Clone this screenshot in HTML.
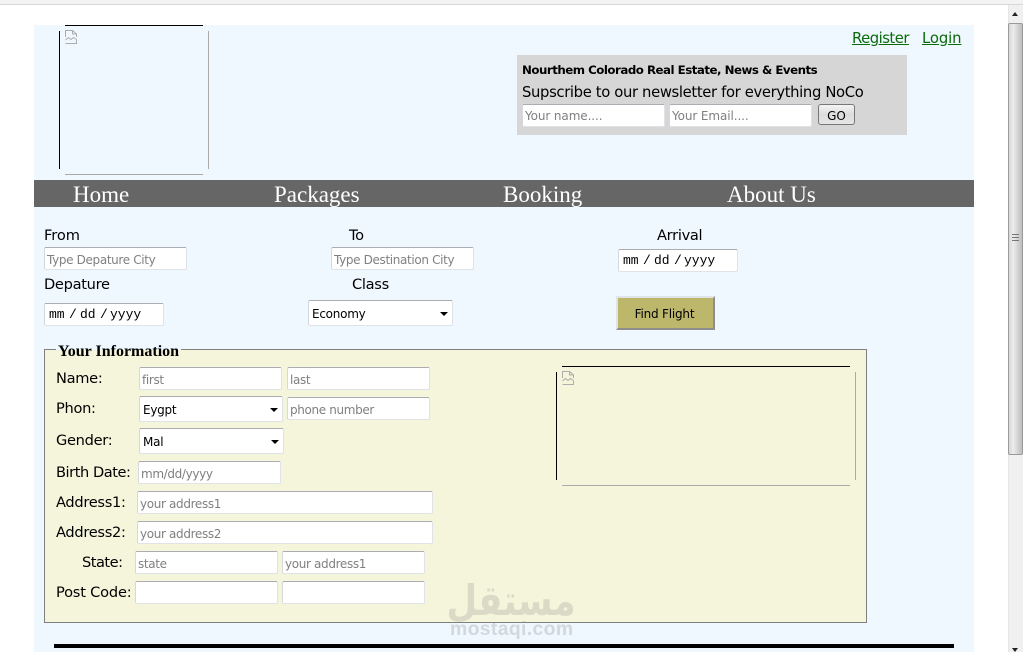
<!DOCTYPE html>
<html>
<head>
<meta charset="utf-8">
<style>
html,body{margin:0;padding:0;width:1023px;height:652px;overflow:hidden;background:#fff;}
body{position:relative;font-family:"DejaVu Sans","Liberation Sans",sans-serif;color:#000;}
.a,input,select,button,a{position:absolute;box-sizing:border-box;}
.l{position:absolute;font-size:14.6px;line-height:20px;white-space:nowrap;letter-spacing:-.3px;margin-top:1px;}
input{height:23px;width:143px;background:#fff;border:1px solid #dfe3e8;border-top-color:#abadb3;border-left-color:#d5d8de;border-radius:2px;padding:2px 2px 0;font:12px "DejaVu Sans",sans-serif;letter-spacing:-.35px;outline:0;}
input::placeholder{color:#808080;opacity:1;}
.sel{position:absolute;box-sizing:border-box;background:#fff;border:1px solid #dfe3e8;border-top-color:#abadb3;border-left-color:#d5d8de;border-radius:2px;font-size:12px;line-height:26px;padding-left:3px;letter-spacing:-.25px;}
.sel i{position:absolute;right:4px;top:11px;width:0;height:0;border:4px solid transparent;border-top:4px solid #000;border-bottom:0;}
.date{position:absolute;box-sizing:border-box;width:120px;height:23px;background:#fff;border:1px solid #dfe3e8;border-top-color:#abadb3;border-left-color:#d5d8de;border-radius:2px;font:13px/22px "Liberation Mono",monospace;}
.date span{position:absolute;top:0;white-space:pre;}
.nav{position:absolute;top:180px;color:#fff;font:23px/29px "Liberation Serif",serif;white-space:nowrap;}
.bi{position:absolute;box-sizing:border-box;}
.bi b{position:absolute;display:block;}
</style>
</head>
<body>
<div class="a" style="left:0;top:0;width:1023px;height:5px;background:#f3f3f3;border-bottom:1px solid #d8d8d8;"></div>

<div class="a" style="left:1008px;top:5px;width:15px;height:647px;background:#f0f0f0;border-left:1px solid #e6e6e6;"></div>
<div class="a" style="left:1008px;top:23px;width:15px;height:432px;background:linear-gradient(90deg,#d8d8d8,#ececec 35%,#dcdcdc 55%,#bdbdbd);border:1px solid #9a9a9a;border-radius:2px;"></div>
<div class="a" style="left:1012px;top:234px;width:7px;height:7px;border-top:1px solid #777;border-bottom:1px solid #777;"></div>
<div class="a" style="left:1012px;top:237px;width:7px;height:1px;background:#777;"></div>
<div class="a" style="left:1012px;top:12px;width:0;height:0;border:3.500px solid transparent;border-bottom:4px solid #222;border-top:0;"></div>
<div class="a" style="left:1012px;top:648px;width:0;height:0;border:3.500px solid transparent;border-top:4px solid #222;border-bottom:0;"></div>

<div class="a" style="left:34px;top:25px;width:940px;height:627px;background:#eff7ff;"></div>

<div class="bi" style="left:59px;top:25px;width:150px;height:150px;">
  <b style="left:6px;top:0;width:138px;height:1px;background:#000;"></b>
  <b style="left:0;top:6px;width:1px;height:138px;background:#000;"></b>
  <b style="right:0;top:6px;width:1px;height:138px;background:#aaa;"></b>
  <b style="left:6px;bottom:0;width:138px;height:1px;background:#aaa;"></b>
  <svg style="position:absolute;left:6px;top:5px" width="12" height="14" viewBox="0 0 12 14"><path d="M.5 7V.5h7l4 3.500v3M.5 13.500h11V9.500M7.500 .5V4h4M.5 10l3-2.500 2.500 2 2.500-2 3 2" fill="none" stroke="#adadad"/></svg>
</div>

<a href="#" style="left:852px;top:29px;color:#0a6b0a;font-size:14.800px;line-height:20px;letter-spacing:-.5px;">Register</a>
<a href="#" style="left:922px;top:29px;color:#0a6b0a;font-size:14.800px;line-height:20px;letter-spacing:-.1px;">Login</a>

<div class="a" style="left:517px;top:55px;width:390px;height:80px;background:#d6d6d6;"></div>
<div class="l" style="left:522px;top:59px;font-size:11.800px;font-weight:bold;letter-spacing:-.5px;">Nourthem Colorado Real Estate, News &amp; Events</div>
<div class="l" style="left:522px;top:82px;font-size:14.800px;letter-spacing:-.36px;">Supscribe to our newsletter for everything NoCo</div>
<input style="left:522px;top:104px;letter-spacing:-.1px;padding-top:0;" placeholder="Your name....">
<input style="left:669px;top:104px;letter-spacing:-.1px;padding-top:0;" placeholder="Your Email....">
<button style="left:818px;top:104px;width:37px;height:21px;border:1px solid #777;border-radius:3px;background:linear-gradient(#f4f4f4,#dcdcdc 50%,#e6e6e6);font:12px 'DejaVu Sans',sans-serif;padding:3px 0 0;color:#000;">GO</button>

<div class="a" style="left:34px;top:180px;width:940px;height:27px;background:#666;"></div>
<div class="nav" style="left:73px;">Home</div>
<div class="nav" style="left:274px;">Packages</div>
<div class="nav" style="left:503px;">Booking</div>
<div class="nav" style="left:727px;">About Us</div>

<div class="l" style="left:44px;top:225px;letter-spacing:-.05px;">From</div>
<input style="left:44px;top:247px;" placeholder="Type Depature City">
<div class="l" style="left:349px;top:225px;">To</div>
<input style="left:331px;top:247px;" placeholder="Type Destination City">
<div class="l" style="left:657px;top:225px;">Arrival</div>
<div class="date" style="left:618px;top:249px;"><span style="left:4px">mm</span><span style="left:24px">/</span><span style="left:35px">dd</span><span style="left:55px">/</span><span style="left:65px">yyyy</span></div>
<div class="l" style="left:44px;top:274px;">Depature</div>
<div class="date" style="left:44px;top:303px;"><span style="left:4px">mm</span><span style="left:24px">/</span><span style="left:35px">dd</span><span style="left:55px">/</span><span style="left:65px">yyyy</span></div>
<div class="l" style="left:352px;top:274px;">Class</div>
<div class="sel" style="left:308px;top:300px;width:145px;height:26px;">Economy<i></i></div>
<button style="left:616px;top:296px;width:99px;height:34px;background:#bdb76b;border:2px solid;border-color:#dfe4e4 #8e8e8e #8e8e8e #dfe4e4;font:12px 'DejaVu Sans',sans-serif;letter-spacing:-.2px;color:#000;padding:1px 2px 0 0;">Find Flight</button>

<div class="a" style="left:44px;top:349px;width:823px;height:274px;background:#f5f5dc;border:1px solid #808080;"></div>
<div class="a" style="left:56px;top:344px;width:125px;height:6px;background:#eff7ff;"></div>
<div class="a" style="left:56px;top:350px;width:125px;height:2px;background:#f5f5dc;"></div>
<div class="a" style="left:58px;top:343px;font:bold 16px/18px 'Liberation Serif',serif;white-space:nowrap;">Your Information</div>

<div class="l" style="left:56px;top:368px;">Name:</div>
<input style="left:139px;top:367px;" placeholder="first">
<input style="left:287px;top:367px;" placeholder="last">
<div class="l" style="left:56px;top:398px;">Phon:</div>
<div class="sel" style="left:139px;top:396px;width:144px;height:26px;">Eygpt<i></i></div>
<input style="left:287px;top:397px;" placeholder="phone number">
<div class="l" style="left:56px;top:430px;">Gender:</div>
<div class="sel" style="left:139px;top:428px;width:145px;height:26px;">Mal<i></i></div>
<div class="l" style="left:56px;top:462px;letter-spacing:-.45px;">Birth Date:</div>
<input style="left:138px;top:461px;" placeholder="mm/dd/yyyy">
<div class="l" style="left:56px;top:492px;">Address1:</div>
<input style="left:137px;top:491px;width:296px;" placeholder="your address1">
<div class="l" style="left:56px;top:522px;">Address2:</div>
<input style="left:137px;top:521px;width:296px;" placeholder="your address2">
<div class="l" style="left:82px;top:552px;letter-spacing:-.5px;">State:</div>
<input style="left:135px;top:551px;" placeholder="state">
<input style="left:282px;top:551px;" placeholder="your address1">
<div class="l" style="left:56px;top:582px;letter-spacing:-.2px;">Post Code:</div>
<input style="left:135px;top:581px;">
<input style="left:282px;top:581px;">

<div class="bi" style="left:556px;top:366px;width:300px;height:120px;">
  <b style="left:6px;top:0;width:288px;height:1px;background:#000;"></b>
  <b style="left:0;top:6px;width:1px;height:108px;background:#000;"></b>
  <b style="right:0;top:6px;width:1px;height:108px;background:#aaa;"></b>
  <b style="left:6px;bottom:0;width:288px;height:1px;background:#aaa;"></b>
  <svg style="position:absolute;left:6px;top:5px" width="12" height="14" viewBox="0 0 12 14"><path d="M.5 7V.5h7l4 3.500v3M.5 13.500h11V9.500M7.500 .5V4h4M.5 10l3-2.500 2.500 2 2.500-2 3 2" fill="none" stroke="#adadad"/></svg>
</div>

<div class="a" style="left:54px;top:644px;width:900px;height:3.500px;background:#000;"></div>

<div class="a" dir="rtl" style="left:444px;top:574px;width:143px;text-align:center;font:bold 42px/54px 'DejaVu Sans',sans-serif;color:#808080;opacity:.22;white-space:nowrap;transform:scaleX(.84);">مستقل</div>
<div class="a" style="left:450px;top:619px;font:bold 19.400px/20px 'Liberation Sans',sans-serif;color:#808080;opacity:.25;white-space:nowrap;letter-spacing:.35px;">mostaqi.com</div>
</body>
</html>
